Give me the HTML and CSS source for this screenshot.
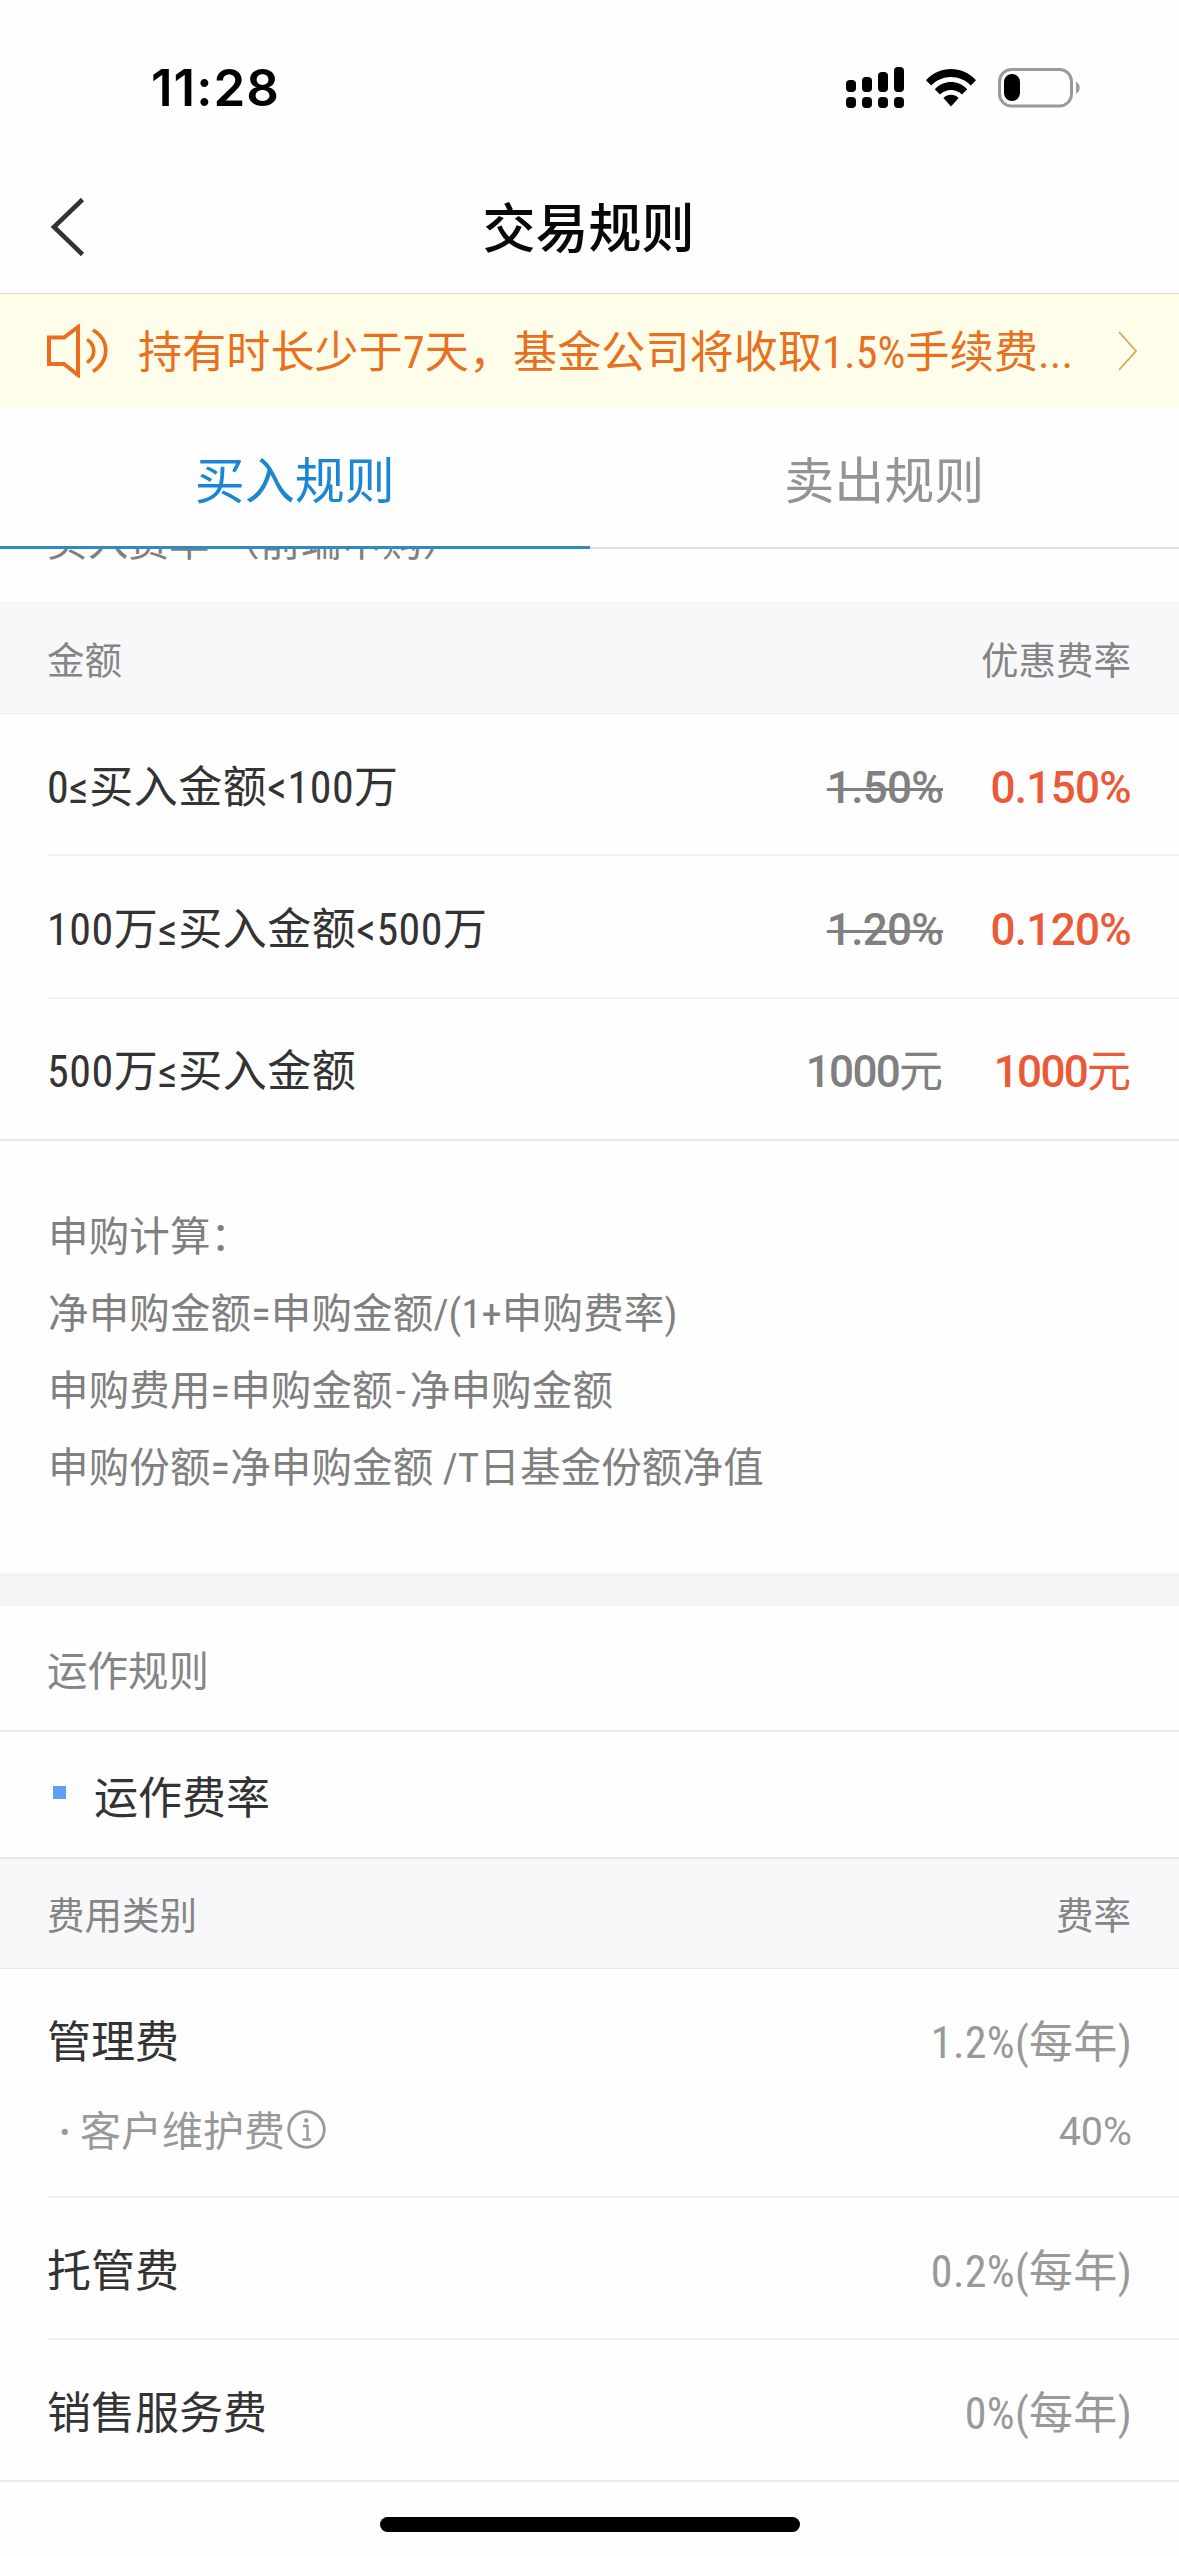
FILE: index.html
```
<!DOCTYPE html>
<html lang="zh-CN">
<head>
<meta charset="utf-8">
<title>交易规则</title>
<link rel="stylesheet" href="styles.css">
</head>
<body>
<div class="screen">
  <header class="status">
    <span class="time">11:28</span>
    <span class="status-icons">
      <svg class="signal" width="58" height="42" viewBox="0 0 58 42">
        <rect x="0" y="13" width="10" height="12" rx="4"/><rect x="16" y="10" width="10" height="15" rx="4"/><rect x="32" y="5" width="10" height="20" rx="4"/><rect x="48" y="0" width="10" height="25" rx="4"/>
        <rect x="0" y="30" width="10" height="11" rx="4"/><rect x="16" y="30" width="10" height="11" rx="4"/><rect x="32" y="30" width="10" height="11" rx="4"/><rect x="48" y="30" width="10" height="11" rx="4"/>
      </svg>
      <svg class="wifi" width="50" height="38" viewBox="0 0 50 38">
        <path d="M0 11.2C14-3.7 36-3.7 50 11.2L44.8 16.6C34 5.2 16 5.2 5.2 16.6Z"/>
        <path d="M8.8 20.2C18 10.6 32 10.6 41.2 20.2L36 25.6C30 19.4 20 19.4 14 25.6Z"/>
        <path d="M17.4 29C21.8 24.8 28.2 24.8 32.6 29L25 37.4Z"/>
      </svg>
      <svg class="battery" width="84" height="40" viewBox="0 0 84 40">
        <rect x="1.5" y="1.5" width="72" height="36.5" rx="12" fill="none" stroke="#9a9a9a" stroke-width="3"/>
        <rect x="6" y="6" width="16" height="27" rx="8"/>
        <path d="M78 13.5C83 17 83 22.5 78 26Z" fill="#9a9a9a"/>
      </svg>
    </span>
  </header>

  <nav class="navbar">
    <svg class="back" width="36" height="58" viewBox="0 0 36 58"><path d="M32.500 1.500L4 29L32.500 56.500" fill="none" stroke="#333" stroke-width="4.600"/></svg>
    <h1 class="title">交易规则</h1>
  </nav>

  <div class="notice">
    <svg class="speaker" width="62" height="54" viewBox="0 0 62 54" fill="none" stroke="#ee6c1e" stroke-width="4">
      <path d="M3 13.500H18L32 3V51L18 40H3Z"/>
      <path d="M41 15.500C50 21 50 33 41 38.500M47 6C64 16 64 37 47 47.500" stroke-width="3.600"/>
    </svg>
    <span class="notice-text">持有时长少于7天，基金公司将收取1.5%手续费...</span>
    <svg class="arrow" width="20" height="40" viewBox="0 0 20 40"><path d="M1 1L18 20L1 39" fill="none" stroke="#dca45c" stroke-width="1.800"/></svg>
  </div>

  <div class="tabs">
    <div class="tab active">买入规则</div>
    <div class="tab">卖出规则</div>
  </div>

  <main>
    <div class="clipped"><span>买入费率 （前端申购）</span></div>

    <section class="table">
      <div class="thead"><span>金额</span><span>优惠费率</span></div>
      <div class="row"><span class="name">0≤买入金额&lt;100万</span><span class="old percent struck">1.50%</span><span class="new percent">0.150%</span></div>
      <div class="row"><span class="name">100万≤买入金额&lt;500万</span><span class="old percent struck">1.20%</span><span class="new percent">0.120%</span></div>
      <div class="row last"><span class="name">500万≤买入金额</span><span class="old">1000<span class="unit">元</span></span><span class="new">1000<span class="unit">元</span></span></div>
    </section>

    <section class="formula">
      <p>申购计算：</p>
      <p>净申购金额=申购金额/(1+申购费率)</p>
      <p>申购费用=申购金额<span class="minus">-</span>净申购金额</p>
      <p>申购份额=净申购金额 /T日基金份额净值</p>
    </section>

    <section class="operation">
      <h2 class="section-title">运作规则</h2>
      <h3 class="sub-title"><i class="square"></i><span>运作费率</span></h3>
      <div class="thead"><span>费用类别</span><span>费率</span></div>
      <div class="row fee tall">
        <div class="line"><span>管理费</span><span class="rate">1.2%(每年)</span></div>
        <div class="line sub">
          <span class="sub-name"><b class="dot">·</b><span>客户维护费</span><svg class="info" width="39" height="39" viewBox="0 0 39 39"><circle cx="19.500" cy="19.500" r="17.800" fill="none" stroke="#999" stroke-width="2.800"/><circle cx="19.300" cy="10.500" r="2.200" fill="#999"/><path d="M16 16H20.500V29M15.500 29.500H24" fill="none" stroke="#999" stroke-width="2.400"/></svg></span>
          <span class="rate">40%</span>
        </div>
      </div>
      <div class="row fee"><span>托管费</span><span class="rate">0.2%(每年)</span></div>
      <div class="row fee last"><span>销售服务费</span><span class="rate">0%(每年)</span></div>
    </section>
  </main>

  <div class="home"></div>
</div>
</body>
</html>
```
FILE: styles.css
```
* { box-sizing: border-box; margin: 0; padding: 0; }
body {
  width: 1179px;
  height: 2556px;
  overflow: hidden;
  background: #fefefe;
  color: #333;
  font-family: "Roboto Condensed", "Noto Sans CJK SC", sans-serif;
  font-size: 44px;
  line-height: 60px;
}
h1, h2, h3 { font-weight: 400; }
svg { display: block; flex: none; }
.screen { display: flex; flex-direction: column; height: 2556px; }

.status {
  height: 176px;
  padding: 0 97px 0 151px;
  display: flex;
  justify-content: space-between;
  align-items: center;
  color: #000;
}
.time {
  font: 600 51px/60px Inter, sans-serif;
  letter-spacing: 1px;
}
.status-icons { display: flex; align-items: center; gap: 22px; }

.navbar {
  height: 118px;
  padding-left: 50px;
  border-bottom: 1px solid #dcdcd6;
  display: grid;
  grid-template-columns: 36px 1fr 88px;
  align-items: center;
}
.back { margin-bottom: 16px; }
.title {
  margin-bottom: 19px;
  text-align: center;
  font-family: "Noto Sans CJK SC", sans-serif;
  font-size: 53px;
  font-weight: 500;
  color: #080808;
}

.notice {
  height: 113px;
  padding: 0 41px 0 46px;
  display: flex;
  align-items: center;
  background: #fefde9;
  color: #e8701f;
}
.notice-text {
  flex: 1;
  margin-left: 30px;
  padding-top: 5px;
  letter-spacing: .15px;
  white-space: nowrap;
}

.tabs { display: flex; height: 142px; }
.tab {
  flex: 1;
  padding-top: 5px;
  border-bottom: 2px solid #e0e0e0;
  font-size: 50px;
  line-height: 140px;
  text-align: center;
  color: #949494;
}
.tab.active { border-bottom: 3px solid #3488c2; color: #1b86d2; }

/* First heading, scrolled partly under the tab bar */
.clipped {
  height: 53px;
  padding-left: 47px;
  overflow: hidden;
  font-size: 40.500px;
  line-height: 60px;
  letter-spacing: .2px;
  color: #808080;
}
.clipped span { display: block; margin-top: -37px; }

.thead {
  height: 112px;
  padding: 5px 48px 0 47px;
  display: flex;
  justify-content: space-between;
  align-items: center;
  background: #f8f8fa;
  border-top: 1px solid #f0f0f0;
  border-bottom: 1px solid #e9eaec;
  font-size: 37.500px;
  color: #858585;
}
.operation .thead { border-top: 2px solid #e9e9e9; }
.row {
  height: 142.300px;
  margin-left: 47px;
  padding: 7px 48px 0 0;
  display: flex;
  align-items: center;
  border-bottom: 2px solid #f1f1f1;
}
.row.last { margin-left: 0; padding-left: 47px; border-bottom-color: #e9e9e9; }
.name { flex: 1; letter-spacing: .5px; }
.old, .new {
  font-family: Roboto, "Noto Sans CJK SC", sans-serif;
  font-weight: 500;
  letter-spacing: -1.700px;
  text-align: right;
}
.old { color: #808080; }
.new { width: 188px; color: #eb5a38; }
.percent { letter-spacing: -.7px; }
.struck { text-decoration: line-through; text-decoration-thickness: 3px; }
.unit { font-weight: 400; letter-spacing: 0; }

.formula {
  height: 432px;
  padding: 58px 48px 0;
  font-size: 40.500px;
  line-height: 77px;
  letter-spacing: .15px;
  color: #808080;
}
.minus { padding-left: 3px; letter-spacing: 4px; }

.operation { border-top: 33px solid #f4f4f4; }
.section-title {
  height: 126px;
  padding: 8px 48px 0 47px;
  display: flex;
  align-items: center;
  border-bottom: 2px solid #ececec;
  font-size: 40.500px;
  color: #858585;
}
.sub-title {
  height: 125px;
  padding: 9px 48px 0 53px;
  display: flex;
  align-items: center;
  font-size: 44px;
}
.square { width: 13px; height: 13px; margin: 0 28px 13px 0; background: #5c9ef8; }
.fee { justify-content: space-between; }
.rate { margin-right: -1px; color: #999; letter-spacing: .3px; }
.tall { height: 229px; padding-top: 44px; display: block; }
.line { display: flex; justify-content: space-between; }
.line.sub { margin-top: 29px; font-size: 41px; color: #999; }
.line.sub .rate { font-family: Roboto, sans-serif; font-size: 39.500px; letter-spacing: 0; }
.sub-name { display: flex; align-items: center; padding-left: 12px; }
.dot { width: 21px; }
.info { margin: 0 0 5px 2px; }

.home {
  width: 420px;
  height: 15px;
  margin: 35px auto 0;
  border-radius: 8px;
  background: #000;
}
```
